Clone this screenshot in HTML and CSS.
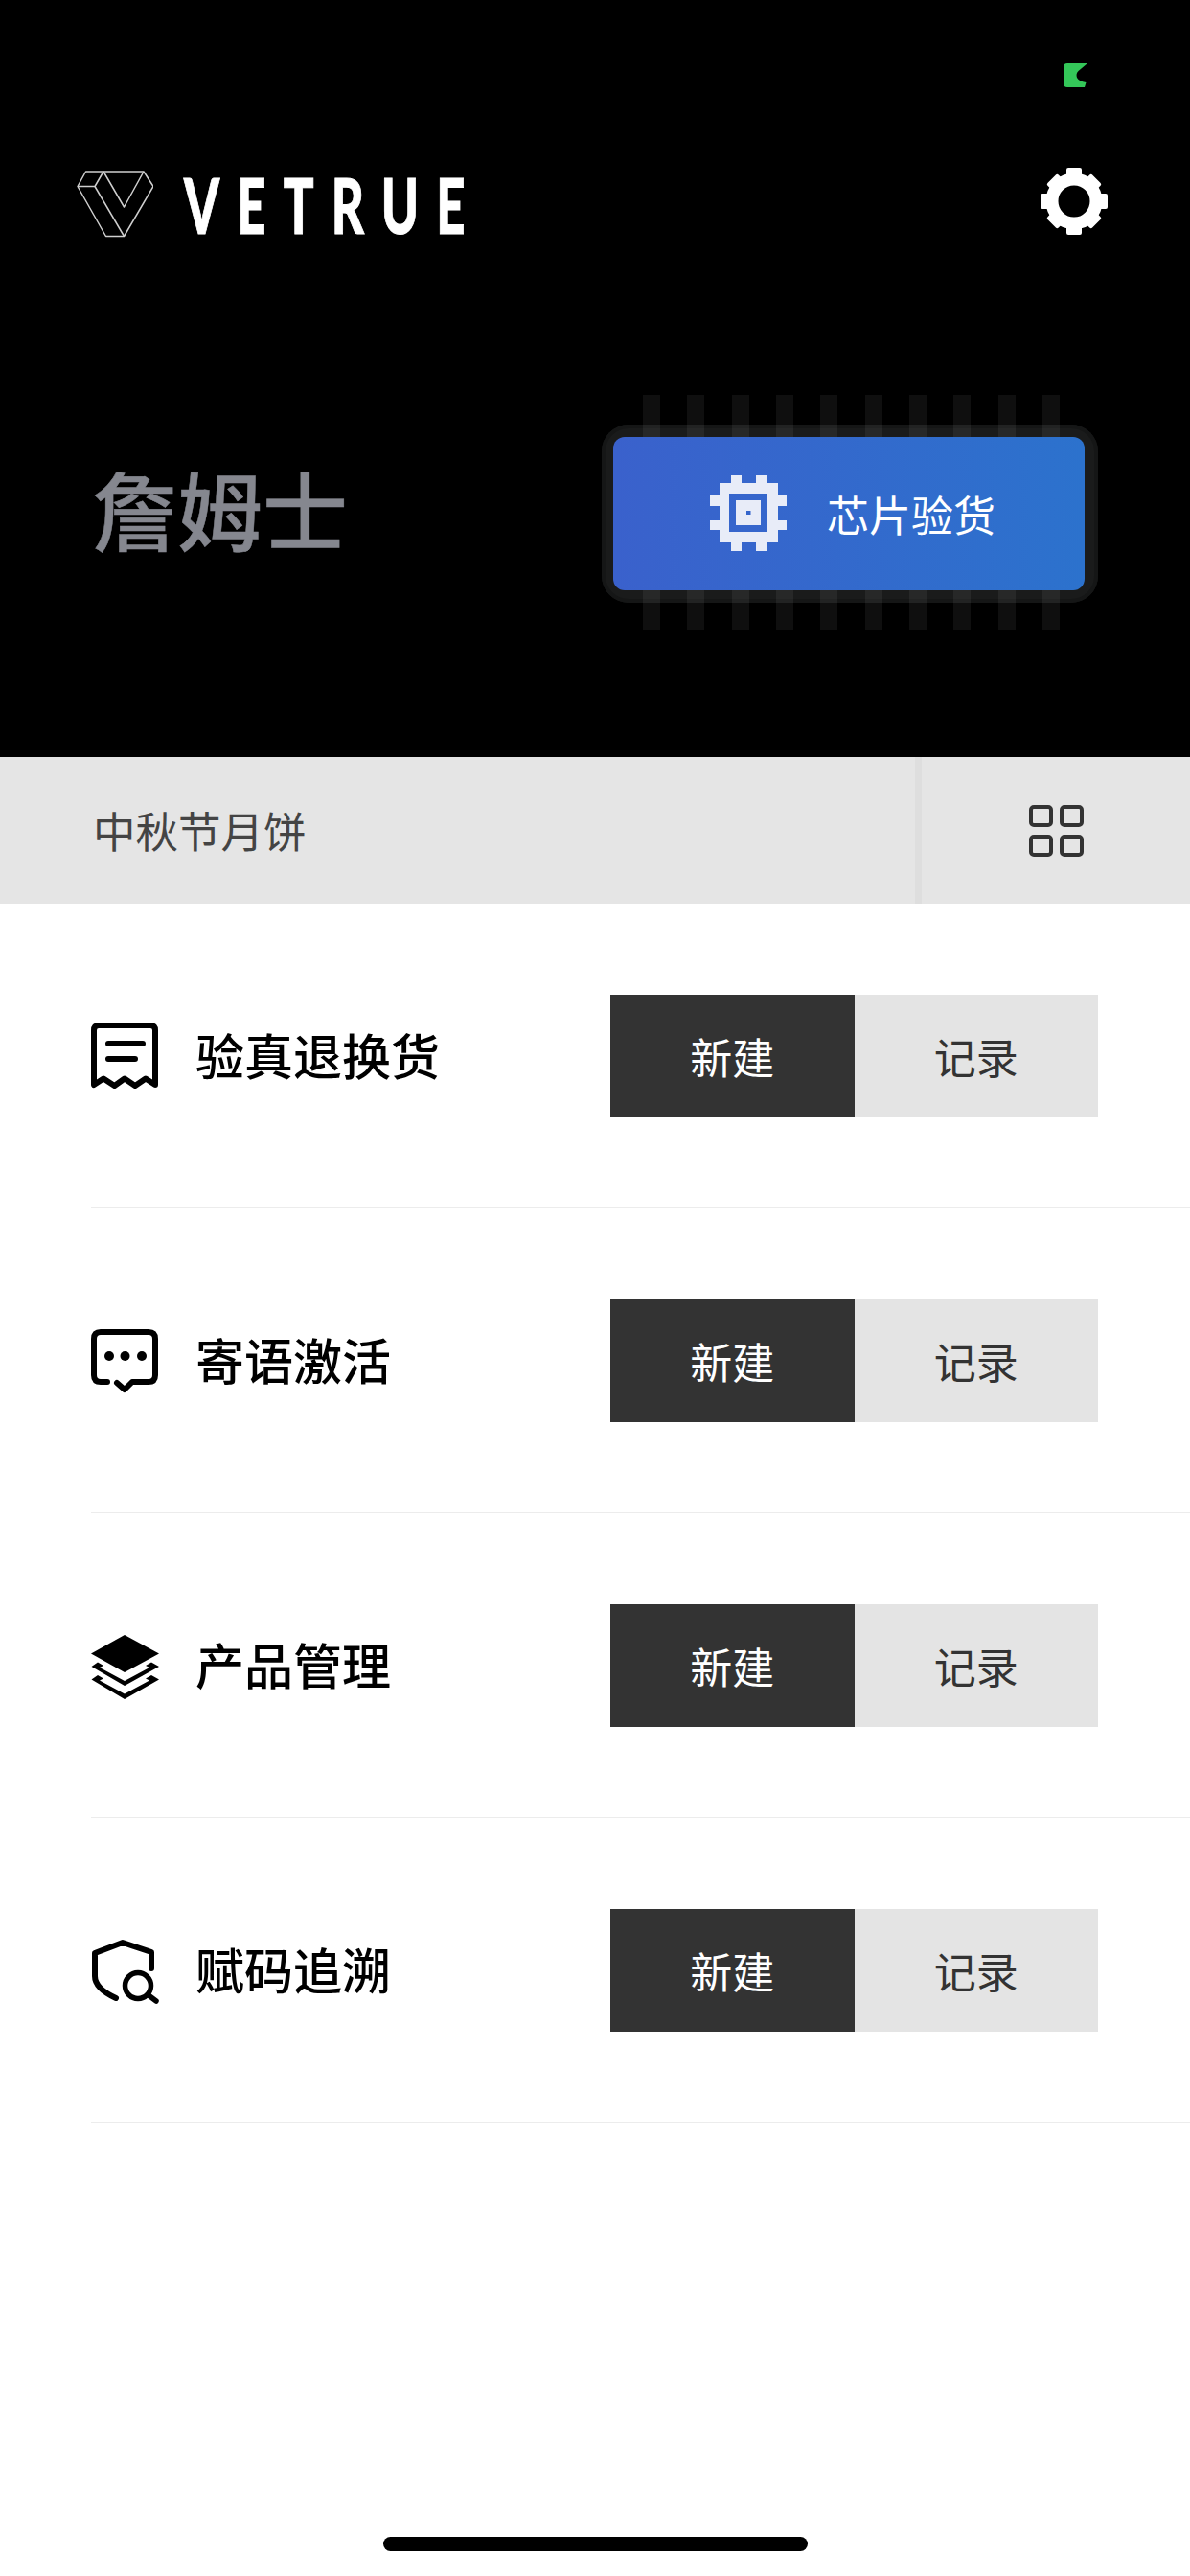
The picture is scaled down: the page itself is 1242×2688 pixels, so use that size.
FILE: index.html
```html
<!DOCTYPE html>
<html lang="zh-CN">
<head>
<meta charset="utf-8">
<title>VETRUE</title>
<link rel="stylesheet" href="styles.css">
</head>
<body>
<div class="page">
  <header class="header">
    <div class="status">
      <svg class="status-dot" viewBox="0 0 25 25"><path fill="#34c759" d="M4 0H25L15.500 8Q12.500 11 14 15Q16 19 23.500 20L22 25H4Q0 25 0 21V4Q0 0 4 0Z"/></svg>
    </div>
    <div class="topbar">
      <div class="brand">
        <svg class="brand-mark" viewBox="0 0 80 70" fill="none" stroke="#cfcfcf" stroke-width="1.500" stroke-linejoin="round">
          <path d="M9.500 1H70L80 16.500L49.500 68.500H30.500L1 16.500Z"/>
          <path d="M1 16.500H19L28 1"/>
          <path d="M19 16.500L49.500 68.500"/>
          <path d="M28 1L49.500 38L70 1"/>
        </svg>
        <span class="brand-name">VETRUE</span>
      </div>
      <svg class="gear" viewBox="0 0 70 70">
        <g fill="#fff">
          <rect x="27" y="0" width="16" height="14" rx="2"/>
          <rect x="27" y="56" width="16" height="14" rx="2"/>
          <rect x="0" y="27" width="14" height="16" rx="2"/>
          <rect x="56" y="27" width="14" height="16" rx="2"/>
          <rect x="27" y="2" width="16" height="14" rx="2" transform="rotate(45 35 35)"/>
          <rect x="27" y="54" width="16" height="14" rx="2" transform="rotate(45 35 35)"/>
          <rect x="2" y="27" width="14" height="16" rx="2" transform="rotate(45 35 35)"/>
          <rect x="54" y="27" width="14" height="16" rx="2" transform="rotate(45 35 35)"/>
        </g>
        <circle cx="35" cy="35" r="23" fill="none" stroke="#fff" stroke-width="13"/>
      </svg>
    </div>
    <div class="hero">
      <div class="name">詹姆士</div>
      <div class="chip">
        <div class="pins">
          <i></i><i></i><i></i><i></i><i></i><i></i><i></i><i></i><i></i><i></i>
        </div>
        <div class="chip-face">
          <svg class="chip-icon" viewBox="0 0 80 79">
            <path fill="#e8ecf8" fill-rule="evenodd" d="M22 0H33V8H48V0H59V8H71V21H80V32H71V47H80V57H71V70H59V79H48V70H33V79H22V70H10V57H0V47H10V32H0V21H10V8H22ZM20 19V59H60V19ZM27 26V52H53V26Z"/>
            <rect x="38" y="37" width="4.500" height="4" fill="#3565cc"/>
          </svg>
          <span class="chip-text">芯片验货</span>
        </div>
      </div>
    </div>
  </header>

  <nav class="tabbar">
    <div class="tab-title">中秋节月饼</div>
    <div class="tab-grid">
      <svg class="grid-icon" viewBox="0 0 57 54" fill="none" stroke="#333" stroke-width="4">
        <rect x="2" y="2" width="21" height="19" rx="3"/>
        <rect x="34" y="2" width="21" height="19" rx="3"/>
        <rect x="2" y="33" width="21" height="19" rx="3"/>
        <rect x="34" y="33" width="21" height="19" rx="3"/>
      </svg>
    </div>
  </nav>

  <main class="list">
    <section class="row">
      <div class="row-title">
        <svg class="row-icon" viewBox="25 26 72 72" fill="none" stroke="#000" stroke-width="6" stroke-linecap="round" stroke-linejoin="round">
          <path d="M28 92V35Q28 30 33 30H87Q92 30 92 35V92L82 85.500L71 93L60 85.500L49.500 93L38 85.500Z"/>
          <path d="M43 49H79M43 65H71"/>
        </svg>
        <span class="row-label">验真退换货</span>
      </div>
      <div class="actions"><button class="btn btn-new">新建</button><button class="btn btn-log">记录</button></div>
    </section>
    <section class="row">
      <div class="row-title">
        <svg class="row-icon" viewBox="25 24 72 72" fill="none" stroke="#000" stroke-width="6" stroke-linecap="round" stroke-linejoin="round">
          <path d="M42 82H35Q28 82 28 75V37Q28 30 35 30H85Q92 30 92 37V75Q92 82 85 82H68L60 90L52 83"/>
          <g fill="#000" stroke="none"><circle cx="44" cy="55" r="5"/><circle cx="60.500" cy="55" r="5"/><circle cx="78" cy="55" r="5"/></g>
        </svg>
        <span class="row-label">寄语激活</span>
      </div>
      <div class="actions"><button class="btn btn-new">新建</button><button class="btn btn-log">记录</button></div>
    </section>
    <section class="row">
      <div class="row-title">
        <svg class="row-icon" viewBox="25 22 72 72" fill="#000">
          <path d="M60 26L96 45.500L60 65L25 45.500Z"/>
          <path d="M25.500 59L32 54.500L38 58L34 60L60 74L86 60L82 58L88 54.500L96 59L60 79Z"/>
          <path d="M25.500 72.500L32 68L38 71.500L34 73.500L60 87.500L86 73.500L82 71.500L88 68L96 72.500L60 93Z"/>
        </svg>
        <span class="row-label">产品管理</span>
      </div>
      <div class="actions"><button class="btn btn-new">新建</button><button class="btn btn-log">记录</button></div>
    </section>
    <section class="row">
      <div class="row-title">
        <svg class="row-icon" viewBox="25 20 72 72" fill="none" stroke="#000" stroke-width="6" stroke-linecap="round" stroke-linejoin="round">
          <path d="M88 54V37L58 27L29 38V62C29 72 38 79 51 85"/>
          <circle cx="74" cy="72" r="13.500" stroke-width="5.500"/>
          <path d="M85 82L93 88" stroke-width="5.500"/>
        </svg>
        <span class="row-label">赋码追溯</span>
      </div>
      <div class="actions"><button class="btn btn-new">新建</button><button class="btn btn-log">记录</button></div>
    </section>
  </main>

  <div class="home-bar"></div>
</div>
</body>
</html>
```
FILE: styles.css
```css
* { box-sizing: border-box; }
html, body { margin: 0; padding: 0; background: #fff; }
body { font-family: "Noto Sans CJK SC", "Noto Sans", sans-serif; }
.page { width: 1242px; height: 2688px; display: flex; flex-direction: column; overflow: hidden; }

.header { height: 790px; background: #000; flex: none; }
.status { height: 175px; display: flex; justify-content: flex-end; padding: 66px 107px 0 0; }
.status-dot { width: 25px; height: 25px; display: block; }
.topbar { height: 70px; display: flex; justify-content: space-between; align-items: center; padding: 0 86px 0 80px; }
.brand { display: flex; align-items: center; gap: 32px; margin-top: 6px; }
.brand-mark { width: 80px; height: 70px; display: block; }
.brand-name { font-family: "Lato", "Liberation Sans", sans-serif; font-size: 80px; line-height: 70px; font-weight: 900; color: #fff; letter-spacing: 27.500px; -webkit-text-stroke: 1px #fff; transform: scaleX(0.66); transform-origin: left center; }
.gear { width: 70px; height: 70px; display: block; }

.hero { margin-top: 198px; display: flex; justify-content: space-between; align-items: center; padding: 0 96px 0 96px; }
.name { font-size: 89px; line-height: 100px; font-weight: 500; color: #85878f; -webkit-text-stroke: 0.5px #85878f; margin-top: -12px; }
.chip { position: relative; width: 518px; height: 186px; padding: 13px 14px 13px 12px; background: #1a1b1b; border-radius: 28px; box-shadow: inset 0 0 0 4px #151616; }
.pins { position: absolute; left: 43px; right: 40px; top: -31px; bottom: -28px; display: flex; justify-content: space-between; }
.pins i { display: block; width: 18px; background: rgba(255, 255, 255, 0.06); }
.chip-face { position: relative; height: 160px; border-radius: 12px; background: linear-gradient(90deg, #3a61cc, #2c72cd); display: flex; align-items: center; padding-left: 101px; gap: 42px; }
.chip-icon { width: 80px; height: 79px; display: block; margin-top: -2px; }
.chip-text { font-size: 44px; line-height: 56px; color: #fff; }

.tabbar { height: 153px; flex: none; background: #e5e5e5; display: flex; }
.tab-title { width: 955px; padding: 0 0 2px 97px; display: flex; align-items: center; font-size: 44.500px; color: #444; }
.tab-grid { flex: 1; border-left: 7px solid #dedede; padding-left: 112px; display: flex; align-items: center; }
.grid-icon { width: 57px; height: 54px; display: block; }

.list { margin-left: 95px; flex: none; }
.row { height: 318px; border-bottom: 1px solid #ececec; display: flex; justify-content: space-between; align-items: center; padding: 1px 96px 0 0; }
.row-title { display: flex; align-items: center; gap: 37px; }
.row-icon { width: 72px; height: 72px; display: block; }
.row-label { font-size: 51px; font-weight: 500; color: #000; line-height: 70px; margin-top: -5px; }
.actions { display: flex; }
.btn { width: 254.500px; height: 128px; border: 0; padding: 0; margin: 0; font-family: inherit; font-size: 44px; display: block; }
.btn-new { background: #333; color: #fff; }
.btn-log { background: #e4e4e4; color: #333; }

.home-bar { width: 443px; height: 15px; background: #000; border-radius: 8px; margin: 432px 0 0 400px; flex: none; }
```
